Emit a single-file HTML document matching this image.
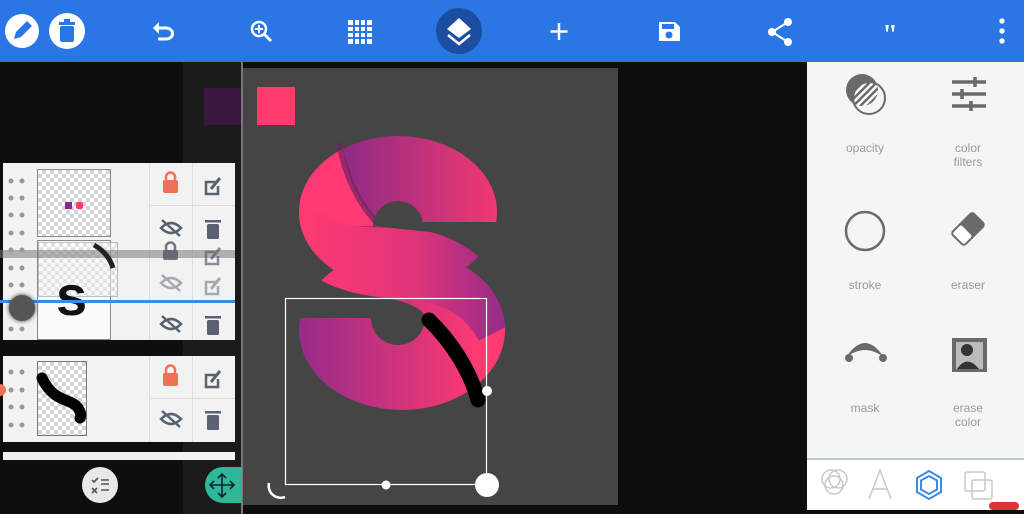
<!DOCTYPE html>
<html><head><meta charset="utf-8"><style>
*{margin:0;padding:0;box-sizing:border-box}
body{width:1024px;height:514px;overflow:hidden;background:#0e0e0e;position:relative;font-family:"Liberation Sans",sans-serif}
.abs{position:absolute}
.chk{background-color:#fff;background-image:linear-gradient(45deg,#d4d4d4 25%,transparent 25%,transparent 75%,#d4d4d4 75%),linear-gradient(45deg,#d4d4d4 25%,transparent 25%,transparent 75%,#d4d4d4 75%);background-size:8px 8px;background-position:0 0,4px 4px}
.lbl{position:absolute;width:100px;text-align:center;color:#9a9a9a;font-size:12px;line-height:14px}
</style></head><body>
<div class="abs" style="left:0;top:0;width:1024px;height:62px;background:#2a76e4"></div>
<svg class="abs" style="left:0;top:0" width="1024" height="62">
<circle cx="22" cy="31" r="17" fill="#fff"/>
<path d="M14 39 L16 32 L27 21 L32 26 L21 37 Z" fill="#2a76e4"/>
<circle cx="67" cy="31" r="18" fill="#fff"/>
<rect x="59" y="22" width="16" height="3" fill="#2a76e4"/><rect x="60" y="26" width="14" height="16" rx="2" fill="#2a76e4"/><rect x="64" y="19" width="6" height="3" fill="#2a76e4"/>
<path d="M157 28 H166 a6 5 0 0 1 0 11 H158" stroke="#fff" stroke-width="3" fill="none"/><path d="M153 28 L159 22 L159 34 Z" fill="#fff"/>
<circle cx="259" cy="29" r="7" stroke="#fff" stroke-width="2.5" fill="none"/><path d="M264 34 L271 41" stroke="#fff" stroke-width="3"/><path d="M259 25 V33 M255 29 H263" stroke="#fff" stroke-width="2"/>
<rect x="348" y="20" width="24" height="24" fill="#fff"/>
<path d="M354 20 V44 M360 20 V44 M366 20 V44 M348 26 H372 M348 32 H372 M348 38 H372" stroke="#2a76e4" stroke-width="2"/>
<circle cx="459" cy="31" r="23" fill="#1b4ea0"/>
<path d="M459 18 L471 29 L459 38 L447 29 Z" fill="#fff"/><path d="M448 35 L459 44 L470 35" stroke="#fff" stroke-width="2.5" fill="none"/>
<path d="M559 23 V40 M550.5 31.5 H567.5" stroke="#fff" stroke-width="2.5"/>
<path d="M659 22 H675 L680 27 V41 H659 Z" fill="#fff"/><circle cx="669" cy="35" r="3.5" fill="#2a76e4"/><rect x="662" y="24" width="12" height="5" fill="#2a76e4"/>
<circle cx="788" cy="22" r="4" fill="#fff"/><circle cx="772" cy="32" r="4" fill="#fff"/><circle cx="788" cy="42" r="4" fill="#fff"/><path d="M788 22 L772 32 L788 42" stroke="#fff" stroke-width="2" fill="none"/>
<text x="890" y="44" font-size="28" font-weight="bold" fill="#fff" text-anchor="middle" font-family="Liberation Serif">"</text>
<circle cx="1002" cy="21" r="2.7" fill="#fff"/><circle cx="1002" cy="31" r="2.7" fill="#fff"/><circle cx="1002" cy="41" r="2.7" fill="#fff"/>
</svg>
<div class="abs" style="left:183px;top:62px;width:59px;height:452px;background:#1b1b1b"></div>
<div class="abs" style="left:204px;top:88px;width:38px;height:37px;background:#3a1640"></div>
<div class="abs" style="left:241px;top:62px;width:2px;height:452px;background:#777"></div>
<div class="abs" style="left:243px;top:68px;width:375px;height:437px;background:#454545"></div>
<div class="abs" style="left:257px;top:87px;width:38px;height:38px;background:#ff3a6c"></div>
<svg class="abs" style="left:0;top:0" width="1024" height="514">
<defs>
<linearGradient id="gu" x1="300" y1="0" x2="497" y2="0" gradientUnits="userSpaceOnUse"><stop offset="0" stop-color="#ff3a72"/><stop offset="0.2" stop-color="#f53870"/><stop offset="0.21" stop-color="#8e2a84"/><stop offset="1" stop-color="#f23872"/></linearGradient>
<linearGradient id="gb" x1="300" y1="0" x2="505" y2="0" gradientUnits="userSpaceOnUse"><stop offset="0" stop-color="#ff3a72"/><stop offset="0.55" stop-color="#e0347a"/><stop offset="1" stop-color="#962c88"/></linearGradient>
<linearGradient id="gl" x1="300" y1="0" x2="480" y2="0" gradientUnits="userSpaceOnUse"><stop offset="0" stop-color="#962c88"/><stop offset="1" stop-color="#ff3a72"/></linearGradient>
<clipPath id="cs"><ellipse cx="398" cy="212" rx="99" ry="76"/><ellipse cx="402" cy="330" rx="103" ry="80"/></clipPath>
</defs>
<ellipse cx="398" cy="212" rx="99" ry="76" fill="url(#gu)"/>
<ellipse cx="402" cy="330" rx="103" ry="80" fill="url(#gl)"/>
<path d="M300 200 C300 160 320 145 342 140 C345 175 360 205 380 225 L380 226 L300 226 Z" fill="#ff3a72" clip-path="url(#cs)"/>
<path d="M290 218 C300 262 350 262 400 263 C450 266 490 285 510 325" stroke="url(#gb)" stroke-width="70" fill="none" clip-path="url(#cs)"/>
<path d="M339 143 C346 180 360 205 378 224" stroke="#6e2262" stroke-width="6" fill="none" opacity="0.7"/>
<g fill="#454545">
<path d="M373 226 A25 25 0 0 1 423 226 L423 222 L520 222 L520 305 C495 265 465 240 430 232 Z"/>
<path d="M285 245 C305 280 340 293 385 298 C410 302 425 310 425 318 A27 27 0 0 1 371 318 L285 318 Z"/>
</g>
<path d="M429 320 C450 340 470 370 478 400" stroke="#000" stroke-width="15" fill="none" stroke-linecap="round"/>
<rect x="285.5" y="298.5" width="201" height="186" fill="none" stroke="#fff" stroke-width="1.2"/>
<circle cx="487" cy="391" r="5" fill="#fff"/><circle cx="386" cy="485" r="4.5" fill="#fff"/><circle cx="487" cy="485" r="12" fill="#fff"/>
<path d="M269 483 a12 12 0 0 0 16 14" stroke="#fff" stroke-width="2.5" fill="none"/>
</svg>
<div class="abs" style="left:3px;top:163px;width:232px;height:177px;background:#f2f2f2"></div>
<div class="abs" style="left:149px;top:163px;width:1px;height:177px;background:#ddd"></div>
<div class="abs" style="left:192px;top:163px;width:1px;height:177px;background:#ddd"></div>
<div class="abs" style="left:149px;top:205px;width:86px;height:1px;background:#ddd"></div>
<div class="abs" style="left:149px;top:300px;width:86px;height:1px;background:#ddd"></div>
<div class="abs chk" style="left:37px;top:169px;width:74px;height:68px;border:1px solid #888"></div>
<div class="abs" style="left:65px;top:202px;width:7px;height:7px;background:#8a2a8a"></div>
<div class="abs" style="left:76px;top:202px;width:7px;height:7px;background:#ff3a6c;border-radius:2px"></div>
<div class="abs" style="left:37px;top:240px;width:74px;height:100px;background:#fafafa;border:1px solid #888"></div>
<div class="abs chk" style="left:38px;top:242px;width:80px;height:55px;border:1px solid #999;opacity:0.6"></div>
<div class="abs" style="left:56px;top:268px;font-size:56px;font-weight:bold;color:#111;line-height:56px">s</div>
<div class="abs" style="left:0;top:250px;width:235px;height:8px;background:rgba(120,120,120,0.55)"></div>
<div class="abs" style="left:0;top:300px;width:235px;height:3px;background:#3b8ae8"></div>
<div class="abs" style="left:9px;top:295px;width:26px;height:26px;border-radius:50%;background:#555;box-shadow:0 0 4px #333"></div>
<div class="abs" style="left:3px;top:356px;width:232px;height:86px;background:#f2f2f2"></div>
<div class="abs" style="left:149px;top:356px;width:1px;height:86px;background:#ddd"></div>
<div class="abs" style="left:192px;top:356px;width:1px;height:86px;background:#ddd"></div>
<div class="abs" style="left:149px;top:398px;width:86px;height:1px;background:#ddd"></div>
<div class="abs chk" style="left:37px;top:361px;width:50px;height:75px;border:1px solid #777"></div>
<svg class="abs" style="left:0;top:0" width="242" height="514">
<path d="M42 378 C50 395 60 398 70 402 C80 406 82 415 80 418" stroke="#000" stroke-width="11" fill="none" stroke-linecap="round"/>
<path d="M94 245 C103 250 110 258 113 268" stroke="#222" stroke-width="5" fill="none"/>
<g fill="#999">
<circle cx="11" cy="181" r="2.5"/><circle cx="22" cy="181" r="2.5"/><circle cx="11" cy="198" r="2.5"/><circle cx="22" cy="198" r="2.5"/>
<circle cx="11" cy="215" r="2.5"/><circle cx="22" cy="215" r="2.5"/><circle cx="11" cy="233" r="2.5"/><circle cx="22" cy="233" r="2.5"/>
<circle cx="11" cy="250" r="2.5"/><circle cx="22" cy="250" r="2.5"/><circle cx="11" cy="268" r="2.5"/><circle cx="22" cy="268" r="2.5"/>
<circle cx="11" cy="285" r="2.5"/><circle cx="22" cy="285" r="2.5"/><circle cx="11" cy="329" r="2.5"/><circle cx="22" cy="329" r="2.5"/>
<circle cx="11" cy="372" r="2.5"/><circle cx="22" cy="372" r="2.5"/><circle cx="11" cy="390" r="2.5"/><circle cx="22" cy="390" r="2.5"/>
<circle cx="11" cy="407" r="2.5"/><circle cx="22" cy="407" r="2.5"/><circle cx="11" cy="425" r="2.5"/><circle cx="22" cy="425" r="2.5"/>
</g>
<g><rect x="163" y="180" width="15" height="13" rx="2" fill="#f07058"/><path d="M166 181 v-4 a4.5 4.5 0 0 1 9 0 v4" stroke="#f07058" stroke-width="2.5" fill="none"/></g>
<g transform="translate(0,193)"><rect x="163" y="180" width="15" height="13" rx="2" fill="#f07058"/><path d="M166 181 v-4 a4.5 4.5 0 0 1 9 0 v4" stroke="#f07058" stroke-width="2.5" fill="none"/></g>
<g transform="translate(0,70)" opacity="0.8"><rect x="163" y="180" width="15" height="10" rx="2" fill="#556"/><path d="M166 181 v-4 a4.5 4.5 0 0 1 9 0 v4" stroke="#556" stroke-width="2.5" fill="none"/></g>
<g id="eye" fill="none" stroke="#5a6272" stroke-width="2.5"><path d="M161 228 Q171 218 181 228 Q171 238 161 228 Z"/><path d="M162 220 L180 236"/></g>
<use href="#eye" y="96"/><use href="#eye" y="191"/><use href="#eye" y="55" opacity="0.5"/>
<g id="edit" fill="none" stroke="#5a6272" stroke-width="2.5"><path d="M216 182 H206 V194 H218 V186"/><path d="M211 189 L220 178" stroke-width="3"/></g>
<use href="#edit" y="193"/><use href="#edit" y="70" opacity="0.7"/><use href="#edit" y="100" opacity="0.5"/>
<g id="trash" fill="#5a6272"><rect x="205" y="220" width="16" height="2.5"/><rect x="207" y="224" width="12" height="15" rx="1.5"/></g>
<use href="#trash" y="96"/><use href="#trash" y="191"/>
<circle cx="100" cy="485" r="18" fill="#e8e8e8"/>
<path d="M92 480 l2 2 l4 -4 M92 488 l5 5 M97 488 l-5 5 M101 480 H109 M101 484 H109 M101 490 H109" stroke="#555" stroke-width="1.6" fill="none"/>
<path d="M242 467 H223 a18 18 0 0 0 0 36 H242 Z" fill="#2fb898"/>
<path d="M222 474 V497 M210 485 H234 M218 478 L222 474 L226 478 M218 493 L222 497 L226 493 M214 481 L210 485 L214 489 M230 481 L234 485 L230 489" stroke="#123" stroke-width="1.6" fill="none"/>
<circle cx="0" cy="390" r="6" fill="#f07058"/>
</svg>
<div class="abs" style="left:3px;top:452px;width:232px;height:8px;background:#f2f2f2"></div>
<div class="abs" style="left:807px;top:62px;width:217px;height:396px;background:#f5f5f5"></div>
<div class="abs" style="left:807px;top:458px;width:217px;height:52px;background:#fff;border-top:2px solid #b8c8dc"></div>
<svg class="abs" style="left:807px;top:62px" width="217" height="452">
<defs>
<pattern id="st" width="5" height="5" patternUnits="userSpaceOnUse" patternTransform="rotate(45)"><rect width="2.5" height="5" fill="#fff"/></pattern>
<clipPath id="ci"><circle cx="55" cy="28" r="16"/></clipPath>
</defs>
<circle cx="55" cy="28" r="16" fill="#6a6a6a"/>
<circle cx="62" cy="36" r="15" fill="url(#st)" clip-path="url(#ci)"/>
<circle cx="62" cy="36" r="16" fill="none" stroke="#6a6a6a" stroke-width="2"/>
<g stroke="#6a6a6a" stroke-width="3.5"><path d="M145 20 H179 M145 32 H179 M145 44 H179"/><path d="M168 15 V25 M155 27 V37 M164 39 V49"/></g>
<circle cx="58" cy="169" r="19" fill="none" stroke="#6a6a6a" stroke-width="2.5"/>
<g transform="rotate(-45 161 167)"><rect x="145" y="157" width="32" height="20" rx="4" fill="#6a6a6a"/><rect x="147" y="159" width="12" height="16" rx="2" fill="#fff"/></g>
<path d="M40 294 Q58 268 76 294 L70 291 Q58 285 46 291 Z" fill="#6a6a6a"/><circle cx="42" cy="296" r="4" fill="#6a6a6a"/><circle cx="76" cy="296" r="4" fill="#6a6a6a"/>
<rect x="145" y="276" width="35" height="34" fill="#6a6a6a"/><rect x="149" y="280" width="27" height="27" fill="#bbb"/><circle cx="160" cy="288" r="6" fill="#333"/><path d="M150 307 Q160 292 172 307 Z" fill="#333"/>
<g fill="none" stroke="#c8c8c8" stroke-width="1.5"><circle cx="24" cy="417" r="9"/><circle cx="31" cy="417" r="9"/><circle cx="27" cy="423" r="9"/></g>
<path d="M62 437 L73 408 L84 437 M66 427 H80" stroke="#c8c8c8" stroke-width="1.5" fill="none"/>
<path d="M122 409 L134 416 V430 L122 437 L110 430 V416 Z" stroke="#3b8ae8" stroke-width="2" fill="none"/><path d="M122 414 L130 418.5 V427.5 L122 432 L114 427.5 V418.5 Z" stroke="#3b8ae8" stroke-width="2" fill="none"/>
<rect x="158" y="410" width="20" height="19" rx="2" stroke="#c8c8c8" stroke-width="1.5" fill="none"/><rect x="165" y="418" width="20" height="19" rx="2" stroke="#c8c8c8" stroke-width="1.5" fill="none"/>
<rect x="182" y="440" width="30" height="8" rx="4" fill="#d33"/>
</svg>
<div class="lbl" style="left:815px;top:141px">opacity</div>
<div class="lbl" style="left:918px;top:141px">color<br>filters</div>
<div class="lbl" style="left:815px;top:278px">stroke</div>
<div class="lbl" style="left:918px;top:278px">eraser</div>
<div class="lbl" style="left:815px;top:401px">mask</div>
<div class="lbl" style="left:918px;top:401px">erase<br>color</div>
</body></html>
